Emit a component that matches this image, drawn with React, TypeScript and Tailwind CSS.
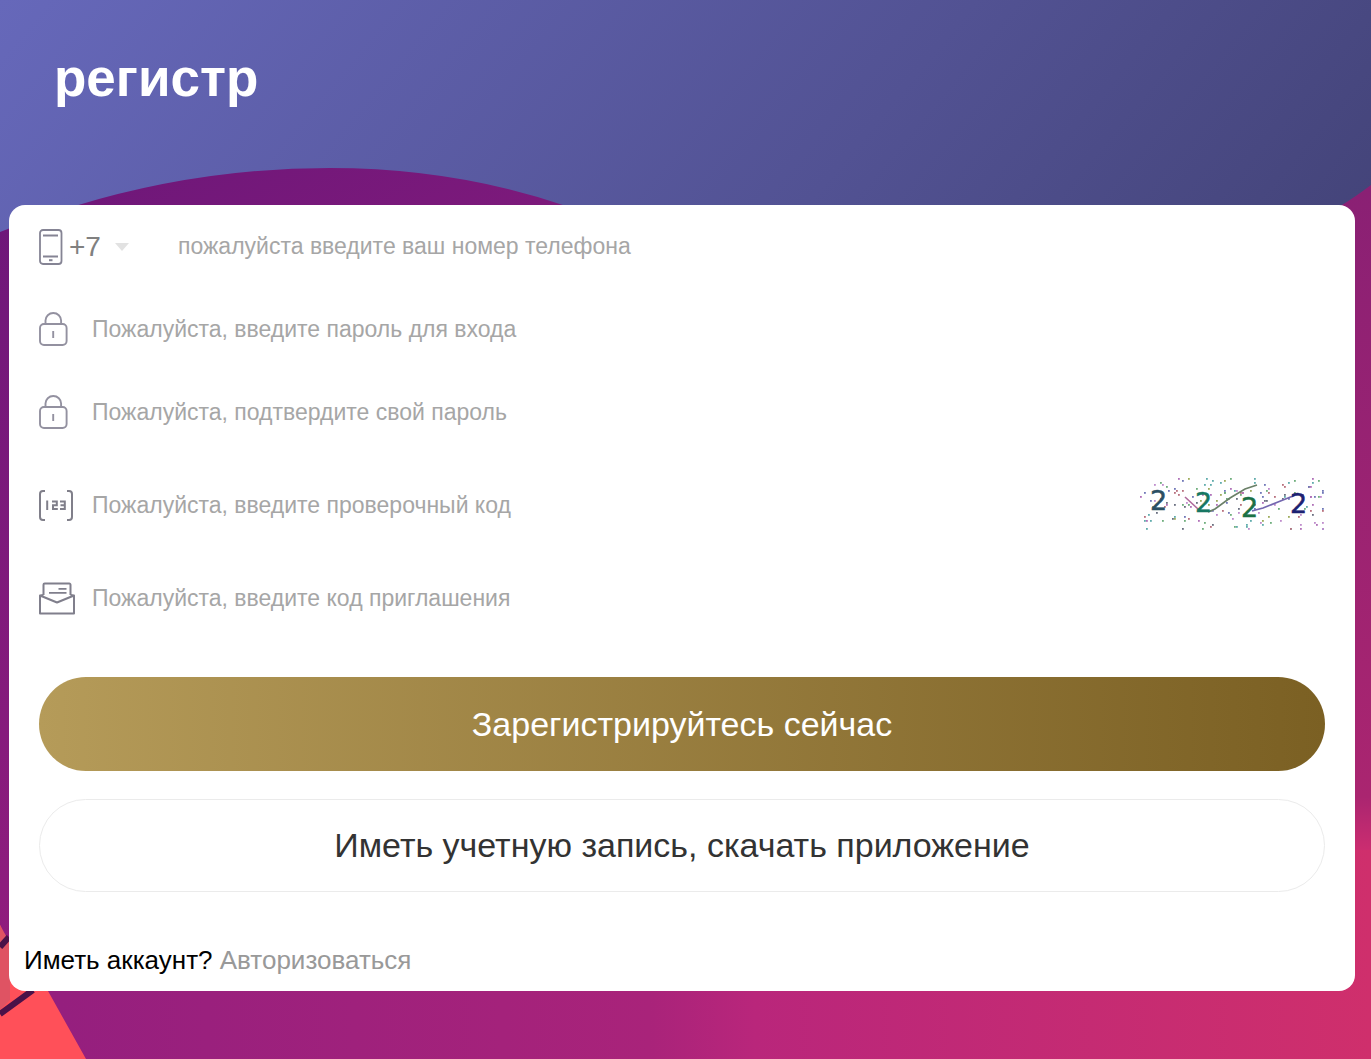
import React from 'react'

const CAPTCHA_COLORS = ['#6fae7d', '#b070b8', '#7078b8', '#b8707e', '#60acac', '#9fac5d', '#bf8ccc', '#6a6f80']

// Speckle positions for the verification picture (small LCG so it is stable between renders)
const speckles = (() => {
  let seed = 2222
  const next = () => {
    seed = (seed * 1103515245 + 12345) % 2147483648
    return seed / 2147483648
  }
  return Array.from({ length: 165 }, () => ({
    x: Math.floor(next() * 92) * 2 + 3,
    y: Math.floor(next() * 26) * 2,
    color: CAPTCHA_COLORS[Math.floor(next() * CAPTCHA_COLORS.length)]
  }))
})()

const PhoneIcon = () => (
  <svg width="24" height="36" viewBox="0 0 24 36" fill="none" stroke="#858494" strokeWidth="1.8" aria-hidden="true">
    <rect x="1" y="1" width="21.5" height="34" rx="3" />
    <path d="M4 6.5h15M4 27.5h15" />
    <path d="M10 31.2h3.5" strokeWidth="2" />
  </svg>
)

const LockIcon = () => (
  <svg width="30" height="36" viewBox="0 0 30 36" fill="none" stroke="#9391a0" strokeWidth="1.9" aria-hidden="true">
    <rect x="1" y="12" width="26.6" height="21" rx="4" />
    <path d="M6.5 12V8.5a7.8 7.5 0 0 1 15.6 0V12" />
    <path d="M14.2 19v7" />
  </svg>
)

const CodeIcon = () => (
  <svg width="36" height="32" viewBox="0 0 36 32" fill="none" stroke="#807f8a" strokeWidth="2" aria-hidden="true">
    <path d="M6 1H4a3 3 0 0 0-3 3v23a3 3 0 0 0 3 3h2M28 1h2a3 3 0 0 1 3 3v23a3 3 0 0 1-3 3h-2" />
    <path d="M8.2 10.5V20M13 11.5h4.8v3.8H14V19h4.8M21 11.5h4.8V19H21M21.5 15.3h4" />
  </svg>
)

const MailIcon = () => (
  <svg width="37" height="34" viewBox="0 0 37 34" fill="none" stroke="#807f8c" strokeWidth="2" strokeLinejoin="round" aria-hidden="true">
    <path d="M4.5 20V2.7a1.2 1.2 0 0 1 1.2-1.2h24.6a1.2 1.2 0 0 1 1.2 1.2V13" stroke="none" />
    <path d="M4.5 13V2.7a1.2 1.2 0 0 1 1.2-1.2h24.6a1.2 1.2 0 0 1 1.2 1.2V13" />
    <path d="M4.5 13L1 13.5v18h34v-18L31.5 13M1 13.5l17 7 17-7" />
    <path d="M19.5 6.8h8M10 10.9h17.5" strokeWidth="1.8" />
  </svg>
)

const Captcha = () => (
  <svg width="188" height="56" viewBox="0 0 188 56" role="img" aria-label="2222">
    {speckles.map((dot, index) => (
      <rect key={index} x={dot.x} y={dot.y} width="1.8" height="1.8" fill={dot.color} />
    ))}
    <path d="M48 19L61 31" stroke="#b06a9c" strokeWidth="1.6" />
    <path d="M71 34L78 31L93 20L108 11L120 7" stroke="#6b8068" strokeWidth="1.6" fill="none" />
    <path d="M115 33L126 30L141 24L156 18" stroke="#7467b0" strokeWidth="1.8" fill="none" />
    <g fontFamily="'DejaVu Sans', sans-serif" fontSize="27" strokeWidth="0.5">
      <text x="13" y="32" fill="#2b4f63" stroke="#2b4f63">2</text>
      <text x="58" y="34" fill="#177763" stroke="#177763">2</text>
      <text x="104" y="39" fill="#1c7145" stroke="#1c7145">2</text>
      <text x="153" y="35" fill="#1c2272" stroke="#1c2272">2</text>
    </g>
  </svg>
)

const Backdrop = () => (
  <svg
    className="absolute inset-0 h-full w-full"
    viewBox="0 0 1371 1059"
    preserveAspectRatio="none"
    aria-hidden="true"
  >
    <defs>
      <linearGradient id="sky" gradientUnits="userSpaceOnUse" x1="0" y1="0" x2="960" y2="800">
        <stop offset="0" stopColor="#6668ba" />
        <stop offset="0.6" stopColor="#525293" />
        <stop offset="1" stopColor="#424276" />
      </linearGradient>
      <linearGradient id="leftHill" gradientUnits="userSpaceOnUse" x1="0" y1="168" x2="520" y2="1059">
        <stop offset="0" stopColor="#6c1779" />
        <stop offset="0.6" stopColor="#8d1c7d" />
        <stop offset="1" stopColor="#a7227a" />
      </linearGradient>
      <linearGradient id="rightHill" gradientUnits="userSpaceOnUse" x1="1371" y1="186" x2="1371" y2="850">
        <stop offset="0" stopColor="#8a2074" />
        <stop offset="0.92" stopColor="#aa2570" />
        <stop offset="1" stopColor="#cb2d70" />
      </linearGradient>
      <linearGradient id="ground" gradientUnits="userSpaceOnUse" x1="60" y1="0" x2="1371" y2="0">
        <stop offset="0" stopColor="#951f7e" />
        <stop offset="0.45" stopColor="#a9237a" />
        <stop offset="0.53" stopColor="#b9267b" />
        <stop offset="1" stopColor="#cf2f6c" />
      </linearGradient>
    </defs>
    <rect width="1371" height="1059" fill="url(#sky)" />
    <path d="M0 232Q40 216 75 206Q200 168 330 168Q455 168 566 206L800 400V1059H0Z" fill="url(#leftHill)" />
    <path d="M1371 185Q1355 197 1342 205L1200 300V860H1371Z" fill="url(#rightHill)" />
    <path d="M700 850H1371V1059H0V980Z" fill="url(#ground)" />
    <path d="M0 925L10 948L48 991L86 1059H0Z" fill="#ff5059" />
    <path d="M0 925L10 943V1000L0 1010Z" fill="#df5363" />
    <path d="M0 947L9 937M0 1014L33 990" stroke="#4a1148" strokeWidth="6" />
  </svg>
)

type FieldProps = {
  id: string
  label: string
  type?: string
  icon: React.ReactNode
  tall?: boolean
  children?: React.ReactNode
}

const Field: React.FC<FieldProps> = ({ id, label, type = 'text', icon, tall, children }) => (
  <div className={`flex items-center ${tall ? 'h-[103px]' : 'h-[83px]'}`}>
    <label htmlFor={id} className="w-[53px] shrink-0" aria-label={label}>
      {icon}
    </label>
    <input
      id={id}
      type={type}
      placeholder={label}
      className="h-12 min-w-0 flex-1 bg-transparent text-[23px] text-[#333] outline-none placeholder:text-[#a6a6a6] placeholder:opacity-100"
    />
    {children}
  </div>
)

export default function App() {
  const [code, setCode] = React.useState('+7')

  return (
    <div className="relative min-h-screen font-['Liberation_Sans',Arial,sans-serif]">
      <Backdrop />

      <div className="relative pr-4 pl-[9px]">
        <header className="flex h-[205px] items-start px-[45px] pt-[46px]">
          <h1 className="text-[53px] leading-[64px] font-bold text-white">регистр</h1>
        </header>

        <main className="rounded-2xl bg-white pb-[15px]">
          <form className="px-[30px]" onSubmit={(e) => e.preventDefault()}>
            <div className="flex h-[83px] items-center">
              <label htmlFor="country" className="w-[30px] shrink-0" aria-label="+7">
                <PhoneIcon />
              </label>
              <div className="flex w-[109px] shrink-0 items-center">
                <select
                  id="country"
                  value={code}
                  onChange={(e) => setCode(e.target.value)}
                  className="w-[46px] appearance-none bg-transparent text-[28px] text-[#808080] outline-none"
                >
                  <option value="+7">+7</option>
                </select>
                <svg width="14" height="8" viewBox="0 0 14 8" aria-hidden="true">
                  <path d="M0 0H14L7 8Z" fill="#e2e2e2" />
                </svg>
              </div>
              <input
                id="phone"
                type="tel"
                aria-label="пожалуйста введите ваш номер телефона"
                placeholder="пожалуйста введите ваш номер телефона"
                className="h-12 min-w-0 flex-1 bg-transparent text-[23px] text-[#333] outline-none placeholder:text-[#a6a6a6] placeholder:opacity-100"
              />
            </div>
            <Field id="password" type="password" label="Пожалуйста, введите пароль для входа" icon={<LockIcon />} />
            <Field id="confirm" type="password" label="Пожалуйста, подтвердите свой пароль" icon={<LockIcon />} />
            <Field id="captcha" label="Пожалуйста, введите проверочный код" icon={<CodeIcon />} tall>
              <Captcha />
            </Field>
            <Field id="invite" label="Пожалуйста, введите код приглашения" icon={<MailIcon />} />

            <button
              type="submit"
              className="mt-[37px] block h-[94px] w-full rounded-full bg-linear-to-r from-[#b59b59] to-[#7b6023] text-[34px] text-white"
            >
              Зарегистрируйтесь сейчас
            </button>
            <button
              type="button"
              className="mt-7 block h-[93px] w-full rounded-full border border-[#ebebeb] bg-white text-[34px] text-[#333]"
            >
              Иметь учетную запись, скачать приложение
            </button>
          </form>

          <p className="mt-[52px] px-[15px] text-[26px] leading-8 text-black">
            Иметь аккаунт?{' '}
            <a href="#login" className="text-[#999]">
              Авторизоваться
            </a>
          </p>
        </main>
      </div>
    </div>
  )
}
